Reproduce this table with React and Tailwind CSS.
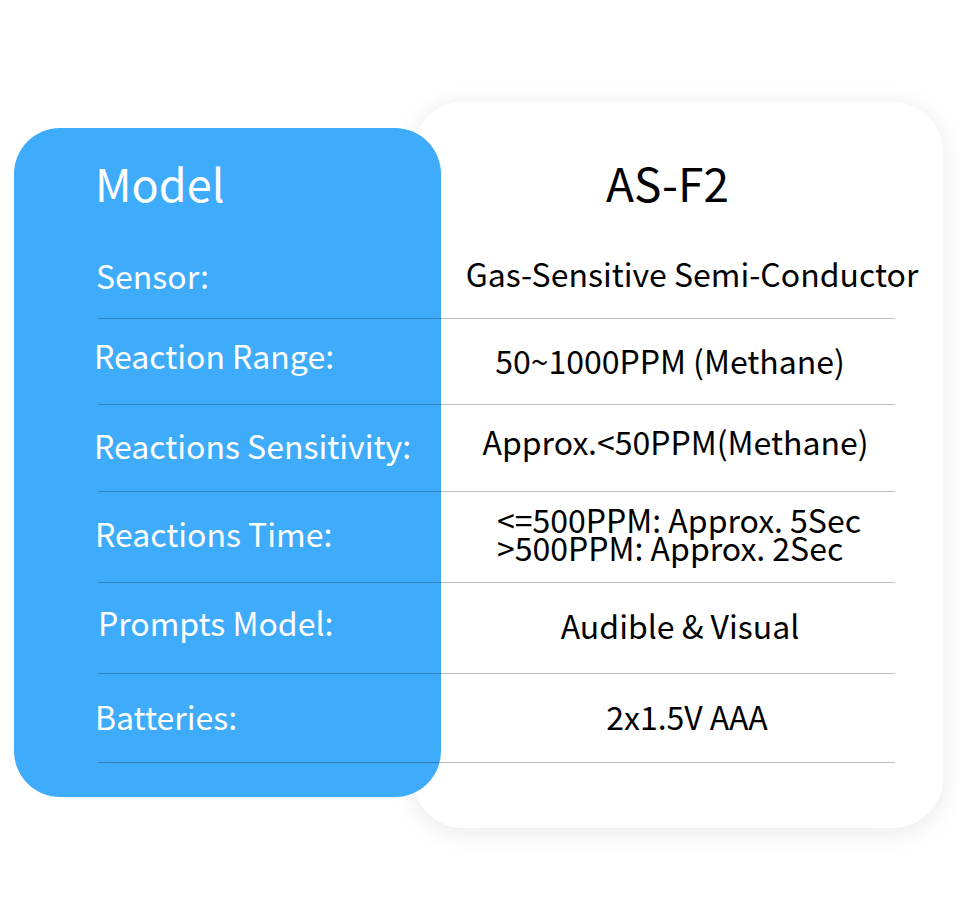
import React from "react";

const rows = [
  { label: "Sensor:", value: ["Gas-Sensitive Semi-Conductor"], h: "h-[82px]", lc: "-ml-[2px] pb-[6px]", vc: "pl-[28px] pb-[9px]" },
  { label: "Reaction Range:", value: ["50~1000PPM (Methane)"], h: "h-[86px]", lc: "-ml-[4px] pb-[13px]", vc: "pr-[12px] pb-[3px]" },
  { label: "Reactions Sensitivity:", value: ["Approx.<50PPM(Methane)"], h: "h-[87px]", lc: "-ml-[4px] pb-[6px]", vc: "pr-[1px] pb-[14px]" },
  { label: "Reactions Time:", value: ["<=500PPM: Approx. 5Sec", ">500PPM: Approx. 2Sec"], h: "h-[91px]", lc: "-ml-[3px] pb-[8px]", vc: "pl-[4px] pb-[8px]" },
  { label: "Prompts Model:", value: ["Audible & Visual"], h: "h-[91px]", lc: "ml-0 pb-[12px]", vc: "pb-[6px]" },
  { label: "Batteries:", value: ["2x1.5V AAA"], h: "h-[89px]", lc: "-ml-[3px] pb-[4px]", vc: "pl-[20px] pb-[4px]" },
];

export default function App() {
  return (
    <div className="relative h-[912px] w-[960px] overflow-hidden bg-white font-['Noto_Sans_CJK_SC','Noto_Sans',sans-serif]">
      {/* cards behind the table */}
      <div className="absolute left-[413px] top-[102px] h-[726px] w-[530px] rounded-[50px] bg-white shadow-[0_4px_26px_rgba(0,0,0,0.09)]" />
      <div className="absolute left-[14px] top-[128px] h-[669px] w-[427px] rounded-[46px] bg-[#3eacfb]" />

      <div className="relative pl-[98px] pt-[151px]">
        {/* header */}
        <div className="flex h-[86px] w-[797px] items-start">
          <div className="-ml-[3px] mt-[9px] w-[346px] shrink-0 text-[45px] leading-none text-white">Model</div>
          <div className="mt-[8px] w-[478px] shrink-0 pr-[25px] text-center text-[46px] leading-none text-black">AS-F2</div>
        </div>

        {rows.map((r) => (
          <div key={r.label} className={`flex w-[797px] items-center border-b border-black/25 ${r.h}`}>
            <div className={`w-[343px] shrink-0 text-[32px] leading-none text-white ${r.lc}`}>{r.label}</div>
            <div className={`flex w-[478px] shrink-0 justify-center text-[32px] text-black ${r.vc}`}>
              <div className="leading-[28px]">
                {r.value.map((v) => (
                  <div key={v} className="whitespace-nowrap">{v}</div>
                ))}
              </div>
            </div>
          </div>
        ))}
      </div>
    </div>
  );
}
